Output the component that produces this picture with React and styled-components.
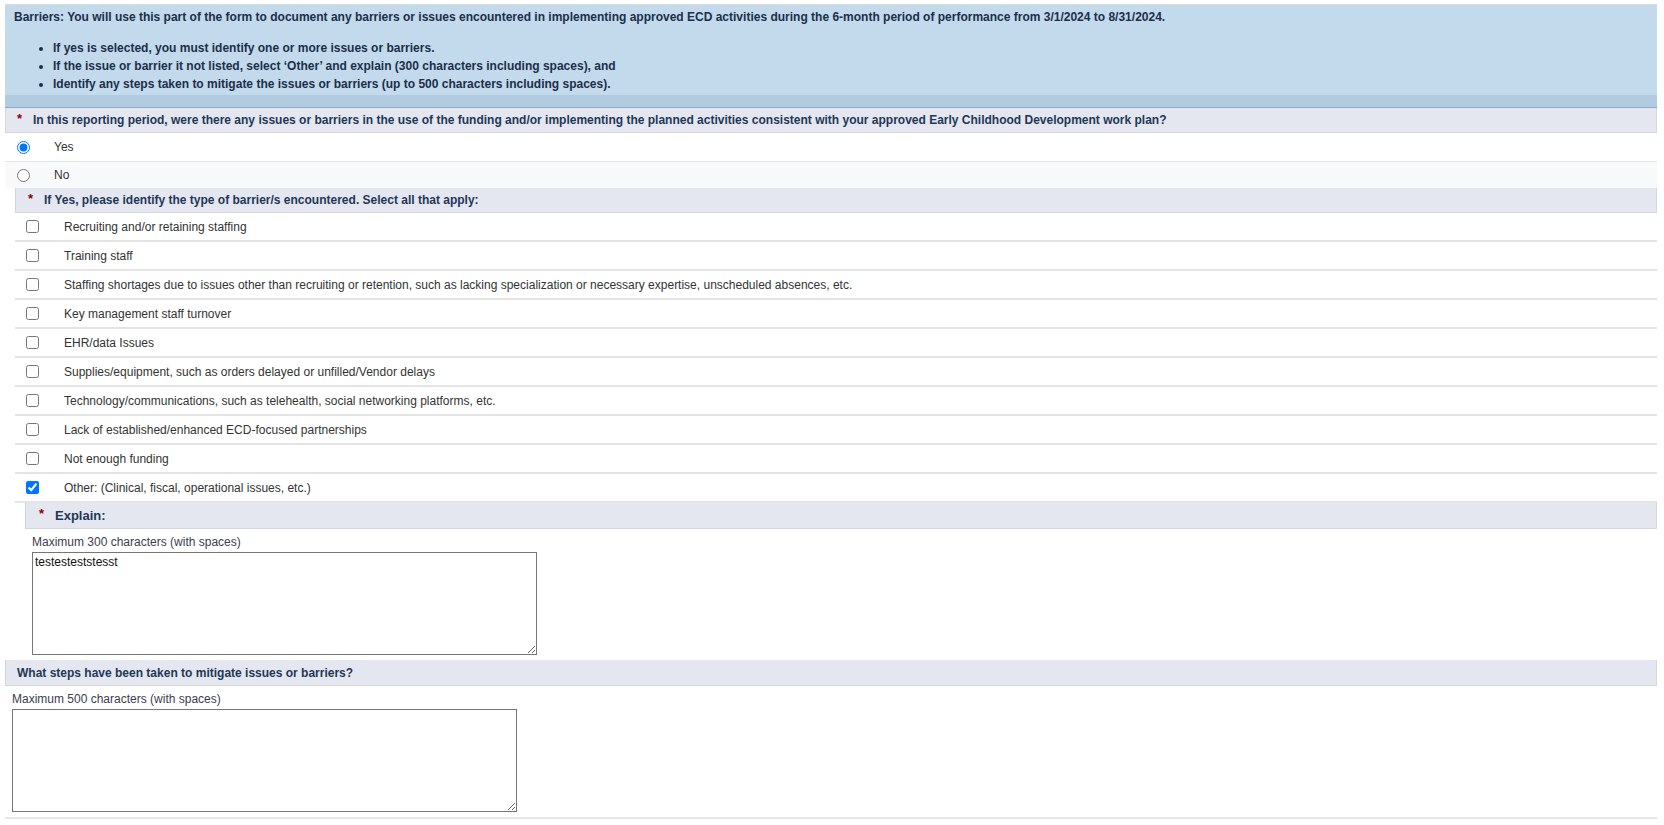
import React, { useState } from "react";
import styled, { createGlobalStyle } from "styled-components";

const GlobalStyle = createGlobalStyle`
  html, body {
    margin: 0;
    padding: 0;
    background: #fff;
  }
  body {
    font-family: "Liberation Sans", Arial, sans-serif;
    font-size: 12px;
    color: #333;
  }
`;

const barriers = [
  "Recruiting and/or retaining staffing",
  "Training staff",
  "Staffing shortages due to issues other than recruiting or retention, such as lacking specialization or necessary expertise, unscheduled absences, etc.",
  "Key management staff turnover",
  "EHR/data Issues",
  "Supplies/equipment, such as orders delayed or unfilled/Vendor delays",
  "Technology/communications, such as telehealth, social networking platforms, etc.",
  "Lack of established/enhanced ECD-focused partnerships",
  "Not enough funding",
  "Other: (Clinical, fiscal, operational issues, etc.)",
];

function App() {
  const [answer, setAnswer] = useState("yes");
  const [checked, setChecked] = useState({ 9: true });
  const [explain, setExplain] = useState("testesteststesst");
  const [steps, setSteps] = useState("");

  const toggle = (i) => setChecked((c) => ({ ...c, [i]: !c[i] }));

  return (
    <>
      <GlobalStyle />
      <Page>
        <Intro>
          <IntroText>
            Barriers: You will use this part of the form to document any barriers or issues encountered in
            implementing approved ECD activities during the 6-month period of performance from 3/1/2024 to
            8/31/2024.
          </IntroText>
          <IntroList>
            <li>If yes is selected, you must identify one or more issues or barriers.</li>
            <li>If the issue or barrier it not listed, select ‘Other’ and explain (300 characters including spaces), and</li>
            <li>Identify any steps taken to mitigate the issues or barriers (up to 500 characters including spaces).</li>
          </IntroList>
        </Intro>
        <IntroStrip />

        <QuestionHeader>
          <Star>*</Star>
          In this reporting period, were there any issues or barriers in the use of the funding and/or implementing
          the planned activities consistent with your approved Early Childhood Development work plan?
        </QuestionHeader>
        <RadioRow>
          <RadioInput
            type="radio"
            name="barriers"
            checked={answer === "yes"}
            onChange={() => setAnswer("yes")}
          />
          <OptionLabel>Yes</OptionLabel>
        </RadioRow>
        <RadioRow $alt>
          <RadioInput
            type="radio"
            name="barriers"
            checked={answer === "no"}
            onChange={() => setAnswer("no")}
          />
          <OptionLabel>No</OptionLabel>
        </RadioRow>

        <SubSection>
          <SubHeader>
            <Star>*</Star>
            If Yes, please identify the type of barrier/s encountered. Select all that apply:
          </SubHeader>
          {barriers.map((label, i) => (
            <CheckRow key={label}>
              <CheckInput type="checkbox" checked={!!checked[i]} onChange={() => toggle(i)} />
              <OptionLabel $wide>{label}</OptionLabel>
            </CheckRow>
          ))}

          <ExplainSection>
            <ExplainHeader>
              <Star>*</Star>
              Explain:
            </ExplainHeader>
            <FieldBlock>
              <Hint>Maximum 300 characters (with spaces)</Hint>
              <TextBox maxLength={300} value={explain} onChange={(e) => setExplain(e.target.value)} />
            </FieldBlock>
          </ExplainSection>
        </SubSection>

        <PlainHeader>What steps have been taken to mitigate issues or barriers?</PlainHeader>
        <FieldBlock>
          <Hint>Maximum 500 characters (with spaces)</Hint>
          <TextBox maxLength={500} value={steps} onChange={(e) => setSteps(e.target.value)} />
        </FieldBlock>
        <BottomRule />
      </Page>
    </>
  );
}

export default App;

const Page = styled.div`
  margin: 4px 7px 0 5px;
`;

const Intro = styled.div`
  background: #c3d9ec;
  border-top: 1px solid #dcdcdc;
  padding: 3px 9px 2px;
  color: #1b2f4a;
  font-weight: bold;
`;

const IntroText = styled.p`
  margin: 0;
  line-height: 18px;
`;

const IntroList = styled.ul`
  margin: 13px 0 0;
  padding-left: 39px;
  li {
    line-height: 18px;
  }
`;

const IntroStrip = styled.div`
  height: 12px;
  background: #b1cce0;
  border-bottom: 1px solid #8eaac2;
`;

const HeaderBase = styled.div`
  display: flex;
  align-items: center;
  background: #e4e7f0;
  border: 1px solid #d2d6de;
  border-top: none;
  color: #1f3758;
  font-weight: bold;
  white-space: nowrap;
`;

const QuestionHeader = styled(HeaderBase)`
  height: 24px;
  padding-left: 11px;
`;

const Star = styled.span`
  color: #8b0000;
  font-size: 13px;
  width: 16px;
  flex: none;
  position: relative;
  top: -2px;
`;

const RadioRow = styled.label`
  display: flex;
  align-items: center;
  height: ${(p) => (p.$alt ? "26px" : "28px")};
  background: ${(p) => (p.$alt ? "#f8f9fb" : "#fff")};
  border-bottom: ${(p) => (p.$alt ? "none" : "1px solid #e6e6e6")};
  cursor: pointer;
`;

const RadioInput = styled.input`
  width: 13px;
  height: 13px;
  margin: 0 0 0 12px;
  accent-color: #0075ff;
  flex: none;
`;

const OptionLabel = styled.span`
  margin-left: ${(p) => (p.$wide ? "25px" : "24px")};
  color: #333;
`;

const SubSection = styled.div`
  margin-left: 10px;
`;

const SubHeader = styled(HeaderBase)`
  height: 24px;
  padding-left: 12px;
  border-left: 1px solid #cfd3db;
`;

const CheckRow = styled.label`
  display: flex;
  align-items: center;
  height: 27px;
  border-bottom: 2px solid #e4e4e4;
  cursor: pointer;
`;

const CheckInput = styled.input`
  width: 13px;
  height: 13px;
  margin: 0 0 0 11px;
  accent-color: #0075ff;
  flex: none;
`;

const ExplainSection = styled.div`
  margin-left: 10px;
`;

const ExplainHeader = styled(HeaderBase)`
  height: 25px;
  padding-left: 13px;
  font-size: 13px;
  border-left: 1px solid #cfd3db;
`;

const FieldBlock = styled.div`
  padding: 6px 0 5px 7px;
`;

const Hint = styled.div`
  color: #3c3c4e;
  line-height: 15px;
  margin-bottom: 2px;
`;

const TextBox = styled.textarea`
  display: block;
  box-sizing: border-box;
  width: 505px;
  height: 103px;
  margin: 0;
  padding: 2px;
  border: 1px solid #767676;
  border-radius: 0;
  font-family: "Liberation Sans", Arial, sans-serif;
  font-size: 12px;
  color: #111;
  resize: both;
`;

const PlainHeader = styled(HeaderBase)`
  height: 25px;
  padding-left: 11px;
  border-left: 1px solid #cfd3db;
`;

const BottomRule = styled.div`
  border-bottom: 2px solid #e6e6e6;
`;
